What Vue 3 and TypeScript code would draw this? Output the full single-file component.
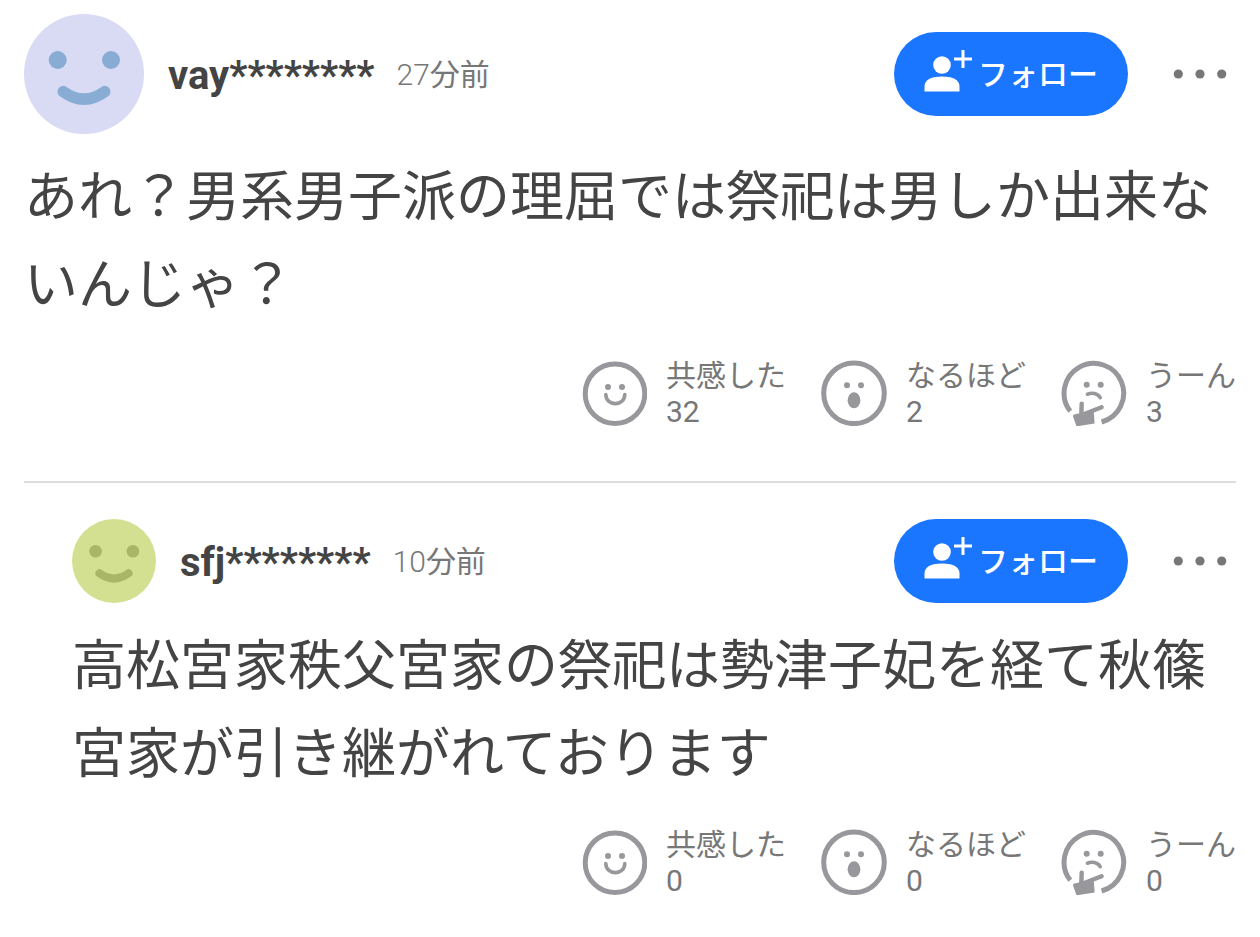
<script setup lang="ts">
interface Reaction {
  kind: 'empathy' | 'insight' | 'doubt'
  label: string
  count: number
}

interface Comment {
  id: number
  name: string
  minutes: number
  text: string
  reply: boolean
  reactions: Reaction[]
}

function makeReactions(empathy: number, insight: number, doubt: number): Reaction[] {
  return [
    { kind: 'empathy', label: '共感した', count: empathy },
    { kind: 'insight', label: 'なるほど', count: insight },
    { kind: 'doubt', label: 'うーん', count: doubt },
  ]
}

const comments: Comment[] = [
  {
    id: 1,
    name: 'vay********',
    minutes: 27,
    text: 'あれ？男系男子派の理屈では祭祀は男しか出来ないんじゃ？',
    reply: false,
    reactions: makeReactions(32, 2, 3),
  },
  {
    id: 2,
    name: 'sfj********',
    minutes: 10,
    text: '高松宮家秩父宮家の祭祀は勢津子妃を経て秋篠宮家が引き継がれております',
    reply: true,
    reactions: makeReactions(0, 0, 0),
  },
]
</script>

<template>
  <main class="thread">
    <article v-for="c in comments" :key="c.id" class="comment" :class="{ reply: c.reply }">
      <header class="head">
        <svg class="avatar" viewBox="0 0 120 120" aria-hidden="true">
          <circle class="face" cx="60" cy="60" r="60" />
          <circle class="feature" cx="33.7" cy="46" r="9" />
          <circle class="feature" cx="87" cy="46" r="9" />
          <path class="smile" d="M39.2 77.6Q60 92.6 80.8 77.6" />
        </svg>
        <span class="name">{{ c.name }}</span>
        <time class="time"><span class="digits">{{ c.minutes }}</span>分前</time>
        <button type="button" class="follow">
          <svg class="follow-icon" viewBox="0 0 48 48" aria-hidden="true">
            <circle cx="18" cy="21" r="8.8" />
            <path d="M.5 47.6V42.5C.5 35.5 8 32.6 18 32.6S35.5 35.5 35.5 42.5V47.6Z" />
            <path class="plus" d="M39 6V24M30 15H48" />
          </svg>
          <span class="follow-label">フォロー</span>
        </button>
        <button type="button" class="more" aria-label="メニュー">
          <svg class="more-icon" viewBox="0 0 72 24" aria-hidden="true">
            <circle cx="14.3" cy="12" r="4.6" />
            <circle cx="36" cy="12" r="4.6" />
            <circle cx="57.7" cy="12" r="4.6" />
          </svg>
        </button>
      </header>

      <p class="text">{{ c.text }}</p>

      <div class="reactions">
        <button v-for="r in c.reactions" :key="r.kind" type="button" class="reaction">
          <svg class="reaction-icon" viewBox="0 0 66 66" aria-hidden="true">
            <template v-if="r.kind === 'empathy'">
              <circle class="line ring" cx="34" cy="33.7" r="29.8" />
              <circle cx="27" cy="27" r="3" />
              <circle cx="41" cy="27" r="3" />
              <path class="line" d="M24.8 34.6C25.2 46.6 43.4 46.6 43.8 34.6" />
            </template>
            <template v-else-if="r.kind === 'insight'">
              <circle class="line ring" cx="33" cy="33.3" r="30.3" />
              <circle cx="26" cy="25.3" r="3" />
              <circle cx="40" cy="25.3" r="3" />
              <ellipse cx="33" cy="40.3" rx="6.4" ry="8" />
            </template>
            <template v-else>
              <path class="line ring" d="M9.2 51.3A29.8 29.8 0 1 1 40.6 62" />
              <circle cx="25.7" cy="24.7" r="3" />
              <circle cx="39.7" cy="24.7" r="3" />
              <path class="line" d="M26.4 34.2C31 32.4 36.5 33.2 39.2 37.6" />
              <path class="line thumb" d="M20.7 43.6L20.3 55" />
              <path class="line thumb" d="M40.6 47.2L22 54.5" />
              <path d="M12 56.2Q12 55 13.4 54.6L31 50.5Q33 51.5 33 54L33.6 63.6L16.4 66.2Q15.4 66.2 15.1 65.2Z" />
            </template>
          </svg>
          <span class="reaction-text">
            <span>{{ r.label }}</span>
            <span>{{ r.count }}</span>
          </span>
        </button>
      </div>
    </article>
  </main>
</template>

<style>
body {
  margin: 0;
  background: #fff;
}
</style>

<style scoped>
.thread {
  padding: 14px 24px 0;
  font-family: Roboto, "Noto Sans CJK JP", sans-serif;
  color: #444;
}

button {
  margin: 0;
  padding: 0;
  border: 0;
  background: none;
  font: inherit;
  color: inherit;
  cursor: pointer;
}

svg {
  display: block;
  flex: none;
}

.comment {
  padding-bottom: 51px;
}

.comment.reply {
  padding: 36px 0 0 48px;
}

.comment:not(.reply) {
  border-bottom: 2px solid #ddd;
}

.head {
  display: flex;
  align-items: center;
}

.avatar {
  width: 120px;
  height: 120px;
  margin-right: 24px;
}

.reply .avatar {
  width: 84px;
  height: 84px;
}

.face {
  fill: #d9dbf5;
}

.feature {
  fill: #88acd4;
}

.smile {
  fill: none;
  stroke: #88acd4;
  stroke-width: 11.5;
  stroke-linecap: round;
}

.reply .face {
  fill: #d4e091;
}

.reply .feature {
  fill: #a9b568;
}

.reply .smile {
  stroke: #a9b568;
}

.name {
  padding-top: 4px;
  font-size: 40px;
  line-height: 48px;
  font-weight: 700;
}

.time {
  margin-left: 22px;
  padding-top: 2px;
  font-size: 30px;
  line-height: 36px;
  color: #777;
}

.digits {
  font-weight: 300;
}

.follow {
  display: flex;
  align-items: center;
  gap: 6px;
  height: 84px;
  margin-left: auto;
  padding: 0 30px;
  border-radius: 42px;
  background: #1a75ff;
  color: #fff;
  font-size: 30px;
  line-height: 36px;
  font-weight: 500;
}

.follow-icon {
  width: 48px;
  height: 48px;
  margin-bottom: 12px;
  fill: #fff;
}

.follow-label {
  padding-top: 2px;
}

.plus {
  stroke: #fff;
  stroke-width: 3;
}

.more {
  margin-left: 36px;
}

.more-icon {
  width: 72px;
  height: 24px;
  fill: #777;
}

.text {
  margin: 20px 0 28px;
  font-size: 54px;
  line-height: 88px;
  line-break: anywhere;
}

.reactions {
  display: flex;
  justify-content: flex-end;
  gap: 35px;
}

.reaction {
  display: flex;
  align-items: center;
  gap: 19px;
  font-size: 30px;
  line-height: 36px;
  text-align: left;
  color: #777;
}

.reaction-icon {
  width: 66px;
  height: 66px;
  margin-bottom: 2px;
  fill: #97979c;
}

.line {
  fill: none;
  stroke: #97979c;
  stroke-width: 3.6;
  stroke-linecap: round;
}

.ring {
  stroke-width: 5;
  stroke-linecap: butt;
}

.thumb {
  stroke-width: 4.4;
}

.reaction-text {
  display: flex;
  flex-direction: column;
}
</style>
